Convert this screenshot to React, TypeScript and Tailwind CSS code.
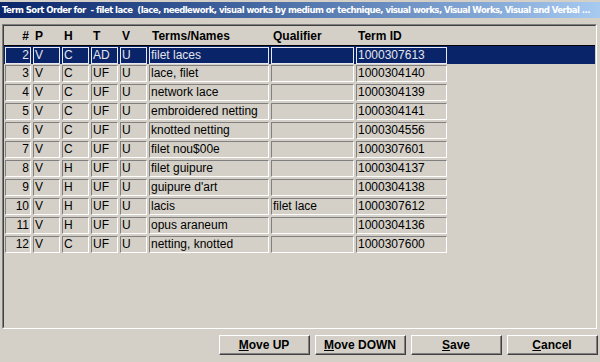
import React from 'react';

type Row = { n: number; p: string; h: string; t: string; v: string; term: string; qual: string; id: string };

const rows: Row[] = [
  { n: 2, p: 'V', h: 'C', t: 'AD', v: 'U', term: 'filet laces', qual: '', id: '1000307613' },
  { n: 3, p: 'V', h: 'C', t: 'UF', v: 'U', term: 'lace, filet', qual: '', id: '1000304140' },
  { n: 4, p: 'V', h: 'C', t: 'UF', v: 'U', term: 'network lace', qual: '', id: '1000304139' },
  { n: 5, p: 'V', h: 'C', t: 'UF', v: 'U', term: 'embroidered netting', qual: '', id: '1000304141' },
  { n: 6, p: 'V', h: 'C', t: 'UF', v: 'U', term: 'knotted netting', qual: '', id: '1000304556' },
  { n: 7, p: 'V', h: 'C', t: 'UF', v: 'U', term: 'filet nou$00e', qual: '', id: '1000307601' },
  { n: 8, p: 'V', h: 'H', t: 'UF', v: 'U', term: 'filet guipure', qual: '', id: '1000304137' },
  { n: 9, p: 'V', h: 'H', t: 'UF', v: 'U', term: "guipure d'art", qual: '', id: '1000304138' },
  { n: 10, p: 'V', h: 'H', t: 'UF', v: 'U', term: 'lacis', qual: 'filet lace', id: '1000307612' },
  { n: 11, p: 'V', h: 'H', t: 'UF', v: 'U', term: 'opus araneum', qual: '', id: '1000304136' },
  { n: 12, p: 'V', h: 'C', t: 'UF', v: 'U', term: 'netting, knotted', qual: '', id: '1000307600' },
];

// column widths, shared by header and rows
const cols = ['w-[26px]', 'w-[27px]', 'w-[27px]', 'w-[27px]', 'w-[27px]', 'w-[120px]', 'w-[83px]', 'w-[91px]'];

function Cell({ w, sel, right, children }: { w: string; sel: boolean; right?: boolean; children?: React.ReactNode }) {
  return (
    <div
      className={`${w} h-[17px] shrink-0 border leading-[15px] overflow-hidden whitespace-nowrap ${
        right ? 'text-right pr-[1px]' : 'pl-[1px]'
      } ${
        sel
          ? 'border-[#e8e8f0] bg-[#0a246a] text-[#e4e4ec]'
          : 'border-t-[#808080] border-l-[#808080] border-r-white border-b-white text-black'
      }`}
    >
      {children}
    </div>
  );
}

function Btn({ k, rest }: { k: string; rest: string }) {
  return (
    <div className="w-[91px] h-[20px] border border-t-white border-l-white border-r-[#404040] border-b-[#404040] bg-[#d4d0c8]">
      <div className="h-full border-r border-b border-[#808080] flex items-center justify-center font-bold text-[12px] text-black">
        <span className="underline">{k}</span>
        {rest}
      </div>
    </div>
  );
}

export default function App() {
  return (
    <div
      className="w-[600px] h-[362px] bg-[#d4d0c8] flex flex-col overflow-hidden"
      style={{ fontFamily: '"Liberation Sans", Arial, sans-serif' }}
    >
      <div className="h-[2px] bg-[#d4d0c8]" />
      <div
        className="h-[16px] bg-gradient-to-r from-[#0a246a] to-[#a6caf0] text-white font-bold text-[9.5px] tracking-[-0.55px] leading-[16px] pl-[2px] whitespace-pre overflow-hidden"
        style={{ fontFamily: '"DejaVu Sans Condensed", "DejaVu Sans", sans-serif' }}
      >
        Term Sort Order for  - filet lace  (lace, needlework, visual works by medium or technique, visual works, Visual Works, Visual and Verbal ...
      </div>

      <div className="mt-[6px] ml-[2px] mr-[3px] h-[305px] border border-t-[#808080] border-l-[#808080] border-r-white border-b-white">
        <div className="h-full border border-t-[#404040] border-l-[#404040] border-r-[#d4d0c8] border-b-[#d4d0c8] text-[12px]">
          <div className="h-[19px] flex items-center pl-[1px] gap-[2px] font-bold text-black">
            <div className={`${cols[0]} text-right pr-[2px]`}>#</div>
            <div className={`${cols[1]} pl-[2px]`}>P</div>
            <div className={`${cols[2]} pl-[2px]`}>H</div>
            <div className={`${cols[3]} pl-[2px]`}>T</div>
            <div className={`${cols[4]} pl-[2px]`}>V</div>
            <div className={`${cols[5]} pl-[3px]`}>Terms/Names</div>
            <div className={`${cols[6]} pl-[2px]`}>Qualifier</div>
            <div className={`${cols[7]} pl-[2px]`}>Term ID</div>
          </div>
          {rows.map((r, i) => {
            const sel = i === 0;
            return (
              <div
                key={r.n}
                className={`h-[19px] flex items-center pl-[1px] gap-[2px] ${sel ? 'bg-[#0a246a] border-t border-black' : ''}`}
              >
                <Cell w={cols[0]} sel={sel} right>{r.n}</Cell>
                <Cell w={cols[1]} sel={sel}>{r.p}</Cell>
                <Cell w={cols[2]} sel={sel}>{r.h}</Cell>
                <Cell w={cols[3]} sel={sel}>{r.t}</Cell>
                <Cell w={cols[4]} sel={sel}>{r.v}</Cell>
                <Cell w={cols[5]} sel={sel}>{r.term}</Cell>
                <Cell w={cols[6]} sel={sel}>{r.qual}</Cell>
                <Cell w={cols[7]} sel={sel}>{r.id}</Cell>
              </div>
            );
          })}
        </div>
      </div>

      <div className="mt-[6px] flex justify-end gap-[5px] pr-[2px]">
        <Btn k="M" rest="ove UP" />
        <Btn k="M" rest="ove DOWN" />
        <Btn k="S" rest="ave" />
        <Btn k="C" rest="ancel" />
      </div>
    </div>
  );
}
